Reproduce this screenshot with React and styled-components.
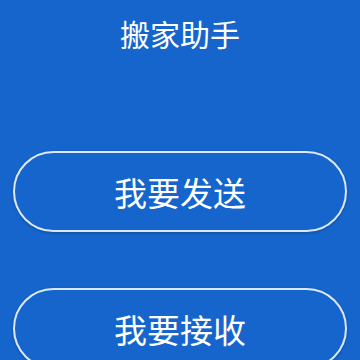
import styled, { createGlobalStyle } from 'styled-components';

const GlobalStyle = createGlobalStyle`
  html, body {
    margin: 0;
    padding: 0;
    background-color: #1565cc;
  }
  body {
    font-family: "Noto Sans CJK SC", "Noto Sans", sans-serif;
  }
`;

const Screen = styled.div`
  width: 360px;
  height: 360px;
  overflow: hidden;
  background-color: #1565cc;
  display: flex;
  flex-direction: column;
  align-items: center;
`;

const Title = styled.h1`
  margin: 13px 0 0;
  font-size: 30px;
  font-weight: 400;
  line-height: 40px;
  color: #ffffff;
`;

const ButtonList = styled.div`
  margin-top: 98px;
  width: 100%;
  padding: 0 13px;
  box-sizing: border-box;
  display: flex;
  flex-direction: column;
  gap: 56px;
`;

const PillButton = styled.button`
  height: 81px;
  width: 100%;
  border: 2px solid rgba(255, 255, 255, 0.85);
  border-radius: 41px;
  background: transparent;
  color: #ffffff;
  font-family: inherit;
  font-size: 33px;
  font-weight: 400;
  box-shadow: 0 1px 3px rgba(0, 0, 0, 0.25);
  cursor: pointer;
  display: flex;
  align-items: center;
  justify-content: center;
  flex-shrink: 0;
`;

export default function App() {
  return (
    <>
      <GlobalStyle />
      <Screen>
        <Title>搬家助手</Title>
        <ButtonList>
          <PillButton>我要发送</PillButton>
          <PillButton>我要接收</PillButton>
        </ButtonList>
      </Screen>
    </>
  );
}
